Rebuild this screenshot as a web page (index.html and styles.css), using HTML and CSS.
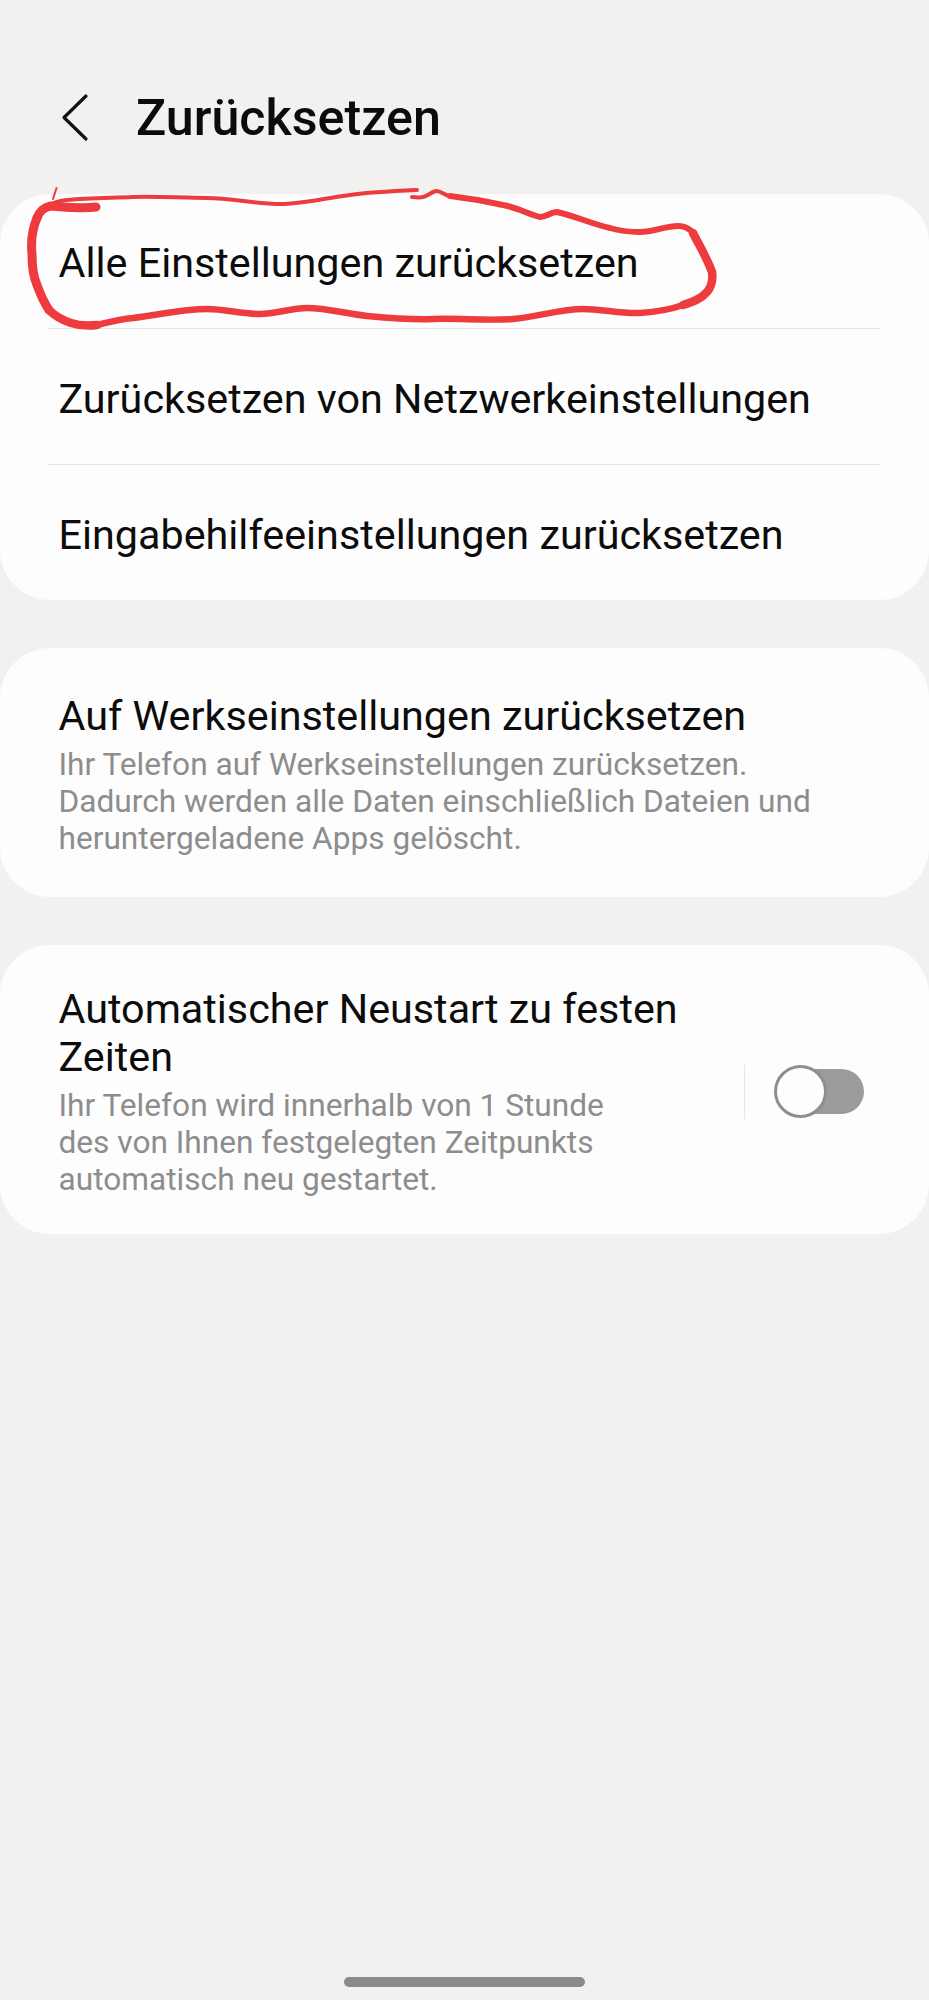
FILE: index.html
```html
<!DOCTYPE html>
<html lang="de">
<head>
<meta charset="utf-8">
<title>Zurücksetzen</title>
<link rel="stylesheet" href="styles.css">
</head>
<body>
<div class="screen">
  <header class="header">
    <svg class="back" viewBox="0 0 30 50" width="30" height="50" aria-hidden="true"><path d="M26 3 L4 24.500 L26 46"/></svg>
    <h1 class="title">Zurücksetzen</h1>
  </header>
  <main class="cards">
    <section class="card">
      <div class="row">Alle Einstellungen zurücksetzen</div>
      <div class="row">Zurücksetzen von Netzwerkeinstellungen</div>
      <div class="row">Eingabehilfeeinstellungen zurücksetzen</div>
    </section>
    <section class="card item">
      <div class="item-title">Auf Werkseinstellungen zurücksetzen</div>
      <div class="item-sub">Ihr Telefon auf Werkseinstellungen zurücksetzen.<br>Dadurch werden alle Daten einschließlich Dateien und<br>heruntergeladene Apps gelöscht.</div>
    </section>
    <section class="card item switch-item">
      <div class="switch-text">
        <div class="item-title">Automatischer Neustart zu festen<br>Zeiten</div>
        <div class="item-sub">Ihr Telefon wird innerhalb von 1 Stunde<br>des von Ihnen festgelegten Zeitpunkts<br>automatisch neu gestartet.</div>
      </div>
      <div class="vline"></div>
      <div class="toggle"><div class="knob"></div></div>
    </section>
  </main>
  <div class="home-bar"></div>
  <svg class="scribble" viewBox="0 0 929 400" width="929" height="400" aria-hidden="true">
    <path class="s3" d="M56.500 188 L53 199"/>
    <path class="s5" d="M417 190 C395 191 372 192 350 195 C325 198 303 204 280 204 C255 204 232 198 207 198 C182 198 158 196 133 197 C110 198 88 198 67 200 C58 201 53 203 50 205"/>
    <path class="s9" d="M96 207 C82 209 66 207 50 206 C43 208 39 212 37 218"/>
    <path class="s9" d="M37 218 C31 232 31 244 32 254 C32 266 33 276 37 285 C41 296 45 304 49 310"/>
    <path class="s8" d="M49 310 C56 317 62 320 71 323 C80 326 88 326 97 325"/>
    <path class="s6" d="M97 325 C109 322 121 319 133 318 C158 315 183 309 207 309 C225 309 242 314 260 314 C276 314 291 308 307 308 C327 308 347 314 367 316 C389 318 411 320 433 319 C460 318 486 321 513 319 C537 317 560 309 583 309 C602 309 621 314 640 313 C655 312 669 310 683 305"/>
    <path class="s8" d="M683 305 C693 302 701 299 707 292 C712 286 713 279 712 272 C707 258 699 245 693 233"/>
    <path class="s7" d="M693 233 C689 228 685 226 678 226 C665 226 654 232 640 232 C630 232 620 231 610 228 C592 224 575 216 557 212 C551 212 546 217 540 217 C528 214 516 207 503 205 C485 201 467 198 450 196"/>
    <path class="s4" d="M450 196 C445 196 440 190 436 191 C431 192 428 196 423 197 C419 198 416 197 412 197"/>
  </svg>
</div>
</body>
</html>
```

FILE: styles.css
```css
* {
  box-sizing: border-box;
}

html, body {
  margin: 0;
  padding: 0;
}

body {
  background: #f2f1ef;
  font-family: Roboto, "Liberation Sans", sans-serif;
}

.screen {
  position: relative;
  width: 929px;
  height: 2000px;
  overflow: hidden;
  background: #f2f1ef;
}

.header {
  height: 194px;
  padding: 0 0 0 60px;
  display: flex;
  align-items: flex-start;
}

.back {
  margin-top: 93px;
  flex: none;
}

.back path {
  fill: none;
  stroke: #111;
  stroke-width: 3.200;
  stroke-linecap: round;
  stroke-linejoin: round;
}

.title {
  margin: 83px 0 0 46px;
  font-size: 50.200px;
  line-height: 70px;
  font-weight: 500;
  color: #0b0b0b;
}

.cards {
  display: flex;
  flex-direction: column;
  gap: 48px;
}

.card {
  background: #fdfdfd;
  border-radius: 50px;
}

.row {
  height: 135.330px;
  margin: 0 48px;
  padding: 4.500px 0 0 10.500px;
  display: flex;
  align-items: center;
  font-size: 41.300px;
  color: #0c0c0c;
  border-bottom: 1.500px solid #e5e5e4;
}

.row:last-child {
  border-bottom: 0;
}

.item {
  padding: 44.500px 58.500px 39.500px;
}

.item-title {
  font-size: 41.300px;
  line-height: 48px;
  color: #0c0c0c;
}

.item-sub {
  margin-top: 6px;
  font-size: 31.650px;
  line-height: 37px;
  color: #8d8d8d;
}

.switch-item {
  position: relative;
  display: flex;
  align-items: center;
  padding: 40.500px 65px 35.500px 58.500px;
}

.switch-text {
  flex: 1;
}

.vline {
  width: 1px;
  height: 54px;
  background: #e6e6e5;
  flex: none;
  margin-right: 30px;
}

.toggle {
  position: relative;
  width: 89px;
  height: 45px;
  border-radius: 23px;
  background: #9b9b9b;
  flex: none;
}

.knob {
  position: absolute;
  left: -1px;
  top: -4px;
  width: 53px;
  height: 53px;
  border-radius: 50%;
  background: #fdfdfd;
  border: 3px solid #8e8e8e;
}

.home-bar {
  position: absolute;
  left: 344px;
  top: 1977px;
  width: 241px;
  height: 10px;
  border-radius: 5px;
  background: #8a8a8a;
}

.scribble {
  position: absolute;
  left: 0;
  top: 0;
  pointer-events: none;
}

.scribble path {
  fill: none;
  stroke: #ee3b3e;
  stroke-linecap: round;
  stroke-linejoin: round;
}

.s3 { stroke-width: 2; }
.s4 { stroke-width: 4; }
.s5 { stroke-width: 4; }
.s6 { stroke-width: 6.500; }
.s7 { stroke-width: 6; }
.s8 { stroke-width: 8.500; }
.s9 { stroke-width: 9; }
```
